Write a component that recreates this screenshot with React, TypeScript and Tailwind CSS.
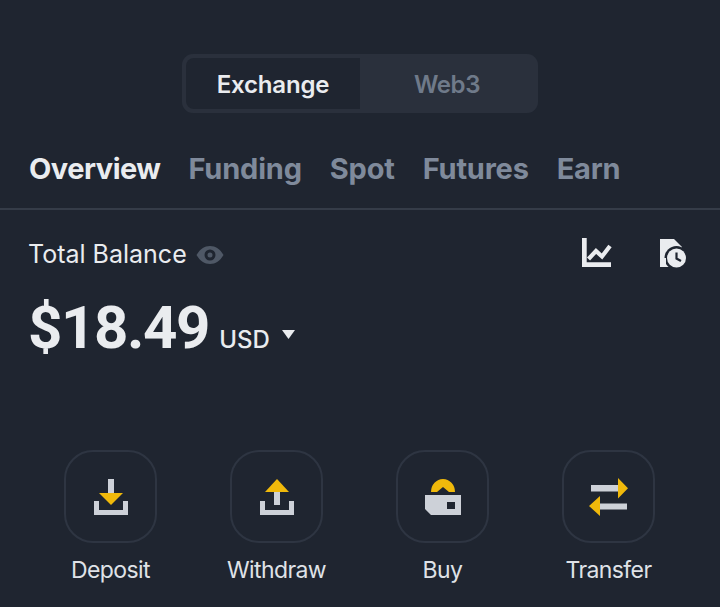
const sans = "font-['Inter','Noto_Sans',sans-serif]";

function Deposit() {
  return (
    <svg width="92" height="92" viewBox="0 0 92 92">
      <path d="M30 51h5v9h24v-9h5v14H30z" fill="#cdd1d8" />
      <path d="M44 29h6v15h-6z" fill="#cdd1d8" />
      <path d="M35 43h24L47 55z" fill="#f0b90b" />
    </svg>
  );
}
function Withdraw() {
  return (
    <svg width="92" height="92" viewBox="0 0 92 92">
      <path d="M30 51h5v9h24v-9h5v14H30z" fill="#cdd1d8" />
      <path d="M44 41h6v14h-6z" fill="#cdd1d8" />
      <path d="M35 42h24L47 29z" fill="#f0b90b" />
    </svg>
  );
}
function Buy() {
  return (
    <svg width="92" height="92" viewBox="0 0 92 92">
      <path d="M35 42A12 13 0 0 1 59 42H53L47 37L41 42Z" fill="#f0b90b" />
      <path fillRule="evenodd" d="M29 45h36v20H35l-6-6zM51 52v7h8v-7z" fill="#cdd1d8" />
    </svg>
  );
}
function Transfer() {
  return (
    <svg width="92" height="92" viewBox="0 0 92 92">
      <path d="M29 35h27v6.500H29zM38 53.500h27v6H38z" fill="#cdd1d8" />
      <path d="M56 28l10 10.300-10 10.200zM38 46v20L27 56z" fill="#f0b90b" />
    </svg>
  );
}
function ChartIcon() {
  return (
    <svg width="30" height="30" viewBox="0 0 30 30" fill="none">
      <path d="M0 0h4.700v24.300H29V29H0z" fill="#eaecef" />
      <path d="M6.500 21L14 13l6 5.500L28 8" stroke="#eaecef" strokeWidth="4.200" />
    </svg>
  );
}
function HistoryIcon() {
  return (
    <svg width="27" height="30" viewBox="0 0 27 30">
      <path d="M0 1h14l8 8v20H0z" fill="#eaecef" />
      <circle cx="16.500" cy="20" r="12" fill="#1f2530" />
      <path d="M0 20h6v9H0z" fill="#eaecef" />
      <circle cx="16.500" cy="20" r="9.500" fill="#eaecef" />
      <path d="M16.500 14.500v6l4.500 2.500" stroke="#1f2530" strokeWidth="2.200" fill="none" />
    </svg>
  );
}
function EyeIcon() {
  return (
    <svg width="28" height="20" viewBox="0 0 28 20">
      <path fillRule="evenodd" d="M0.500 10C4 4 8.500 1 14 1s10 3 13.500 9C24 16 19.500 19 14 19S4 16 0.500 10zM14 4.500a5.500 5.500 0 1 0 0 11 5.500 5.500 0 0 0 0-11zM14 7.500a2.500 2.500 0 1 1 0 5 2.500 2.500 0 0 1 0-5z" fill="#4f5866" />
    </svg>
  );
}

const actions = [
  { label: "Deposit", icon: <Deposit /> },
  { label: "Withdraw", icon: <Withdraw /> },
  { label: "Buy", icon: <Buy /> },
  { label: "Transfer", icon: <Transfer /> },
];
const tabs = ["Funding", "Spot", "Futures", "Earn"];

export default function App() {
  return (
    <div className={`${sans} w-[720px] h-[607px] overflow-hidden bg-[#1f2530] flex flex-col`}>
      <div className="pt-[54px] flex justify-center">
        <div className="w-[356px] h-[59px] rounded-[11px] bg-[#2a303c] p-[4px] flex">
          <div className="w-[174px] rounded-l-[8px] bg-[#1f2530] flex items-center justify-center pt-[2px] text-[24px] font-semibold tracking-[-0.2px] text-[#eaecef]">Exchange</div>
          <div className="flex-1 flex items-center justify-center pt-[2px] text-[24px] font-semibold tracking-[-0.4px] text-[#6f7a8a]">Web3</div>
        </div>
      </div>

      <div className="mt-[34px] h-[44px] pl-[29px] flex items-center gap-[28px] text-[29px] font-bold tracking-[-0.2px] text-[#7f8a9b]">
        <span className="text-[#eaecef] tracking-[-0.5px]">Overview</span>
        {tabs.map((t) => <span key={t}>{t}</span>)}
      </div>
      <div className="mt-[17px] h-[2px] bg-[#353c48]" />

      <div className="mt-[27px] pl-[28px] pr-[33px] h-[32px] flex items-center justify-between">
        <div className="flex items-center gap-[9px] pt-[4px]">
          <span className="text-[25px] text-[#eaecef]">Total Balance</span>
          <EyeIcon />
        </div>
        <div className="flex items-center gap-[48px]">
          <ChartIcon />
          <HistoryIcon />
        </div>
      </div>

      <div className="mt-[29px] pl-[28px] h-[60px] flex items-end">
        <span className="font-['Roboto',sans-serif] font-bold text-[60px] leading-[60px] tracking-[-1.4px] text-[#eaecef]">$18.49</span>
        <span className="ml-[10px] mb-[0px] text-[24px] font-medium text-[#eaecef]">USD</span>
        <svg className="ml-[12px] mb-[19px]" width="13" height="9" viewBox="0 0 13 9"><path d="M0 0h13L6.500 9z" fill="#eaecef" /></svg>
      </div>

      <div className="mt-[92px] pl-[64px] flex gap-[73px]">
        {actions.map((a) => (
          <div key={a.label} className="w-[93px] flex flex-col items-center">
            <div className="w-[93px] h-[93px] shrink-0 rounded-[29px] border-2 border-[#2e3542] box-border flex items-center justify-center">
              <div className="w-[92px] h-[92px] shrink-0 mr-[1px] mb-[1px]">{a.icon}</div>
            </div>
            <span className="mt-[11px] text-[23px] leading-[32px] tracking-[-0.6px] whitespace-nowrap text-[#dfe2e7]">{a.label}</span>
          </div>
        ))}
      </div>
    </div>
  );
}
